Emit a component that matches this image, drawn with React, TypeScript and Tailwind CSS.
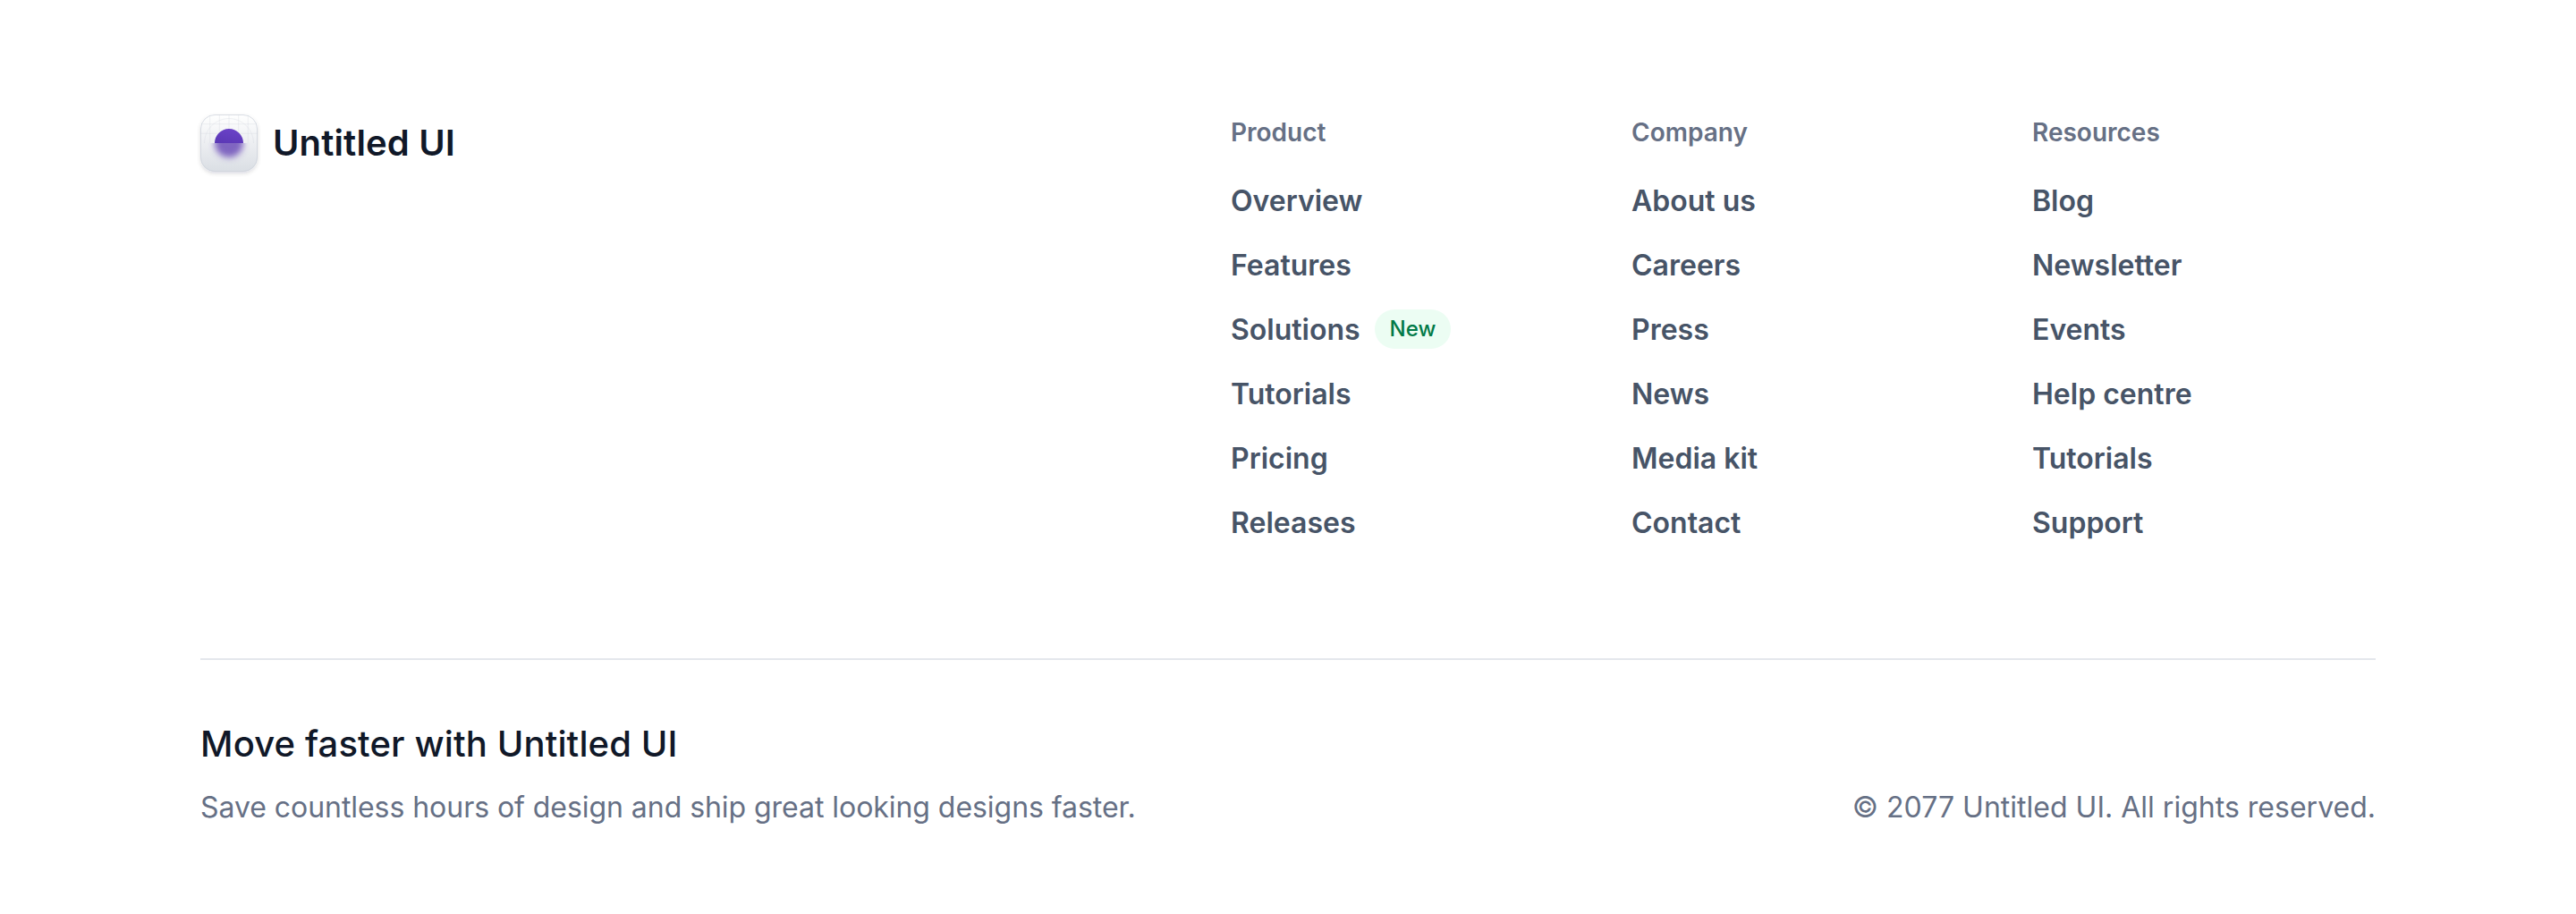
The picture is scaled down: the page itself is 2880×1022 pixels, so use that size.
const columns = [
  { title: "Product", links: ["Overview", "Features", "Solutions", "Tutorials", "Pricing", "Releases"] },
  { title: "Company", links: ["About us", "Careers", "Press", "News", "Media kit", "Contact"] },
  { title: "Resources", links: ["Blog", "Newsletter", "Events", "Help centre", "Tutorials", "Support"] },
];

function Logo() {
  return (
    <div className="flex h-16 items-center gap-[17px]">
      <svg width="64" height="64" viewBox="0 0 64 64" className="overflow-visible">
        <defs>
          <linearGradient id="tile" x1="0" y1="0" x2="0" y2="1">
            <stop offset="0" stopColor="#fff" />
            <stop offset="1" stopColor="#dadee4" />
          </linearGradient>
          <linearGradient id="dot" x1="0" y1="1" x2="0.4" y2="0">
            <stop offset="0" stopColor="#5a37b4" />
            <stop offset="1" stopColor="#6941c6" />
          </linearGradient>
          <filter id="soft" x="-50%" y="-50%" width="200%" height="200%">
            <feGaussianBlur stdDeviation="3.6" />
          </filter>
          <filter id="drop" x="-20%" y="-20%" width="140%" height="150%">
            <feDropShadow dx="0" dy="2" stdDeviation="2" floodColor="#101828" floodOpacity="0.14" />
          </filter>
          <clipPath id="lower">
            <rect x="0" y="32" width="64" height="32" />
          </clipPath>
        </defs>
        <rect width="64" height="64" rx="16" fill="url(#tile)" filter="url(#drop)" />
        <g fill="none" stroke="#d0d5dd" strokeOpacity="0.32">
          <path d="M10.7 2v30M21.3 0v32M32 0v32M42.7 0v32M53.3 2v30M1 10.7h62M0 21.3h64" />
          <path d="M4.5 32a27.5 27.5 0 0 1 55 0" />
        </g>
        <rect x="0.5" y="0.5" width="63" height="63" rx="15.5" fill="none" stroke="#d0d5dd" strokeOpacity="0.8" />
        <path d="M16 32a16 16 0 0 1 32 0z" fill="url(#dot)" />
        <g clipPath="url(#lower)">
          <circle cx="32" cy="32" r="16" fill="#613fb3" fillOpacity="0.78" filter="url(#soft)" />
        </g>
      </svg>
      <span className="text-[40px] font-semibold tracking-[0.15px] text-[#101828]">Untitled UI</span>
    </div>
  );
}

export default function App() {
  return (
    <footer className="h-[1022px] w-[2880px] bg-white px-56 pt-32 font-['Inter',sans-serif]">
      <div className="flex h-[610px] justify-between border-b-2 border-[#e4e7ec]">
        <Logo />
        <div className="grid w-[1280px] grid-cols-3 gap-16">
          {columns.map((c) => (
            <div key={c.title}>
              <h4 className="text-[28px] leading-10 font-semibold text-[#667085]">{c.title}</h4>
              <ul className="mt-[33px] flex flex-col gap-6">
                {c.links.map((l) => (
                  <li key={l} className="flex h-12 items-center gap-4 text-[32px] font-semibold text-[#475467]">
                    {l}
                    {l === "Solutions" && (
                      <span className="mb-0.5 rounded-full bg-[#ecfdf3] px-[17px] py-1 text-2xl leading-9 font-medium text-[#027a48]">New</span>
                    )}
                  </li>
                ))}
              </ul>
            </div>
          ))}
        </div>
      </div>
      <div className="flex items-end justify-between pt-16 text-[32px] leading-[48px] text-[#667085]">
        <div>
          <h3 className="mb-[17px] text-[40px] leading-[60px] font-medium tracking-[0.13px] text-[#101828]">Move faster with Untitled UI</h3>
          <p className="tracking-[-0.05px]">Save countless hours of design and ship great looking designs faster.</p>
        </div>
        <p className="tracking-[0.01px]">© 2077 Untitled UI. All rights reserved.</p>
      </div>
    </footer>
  );
}
